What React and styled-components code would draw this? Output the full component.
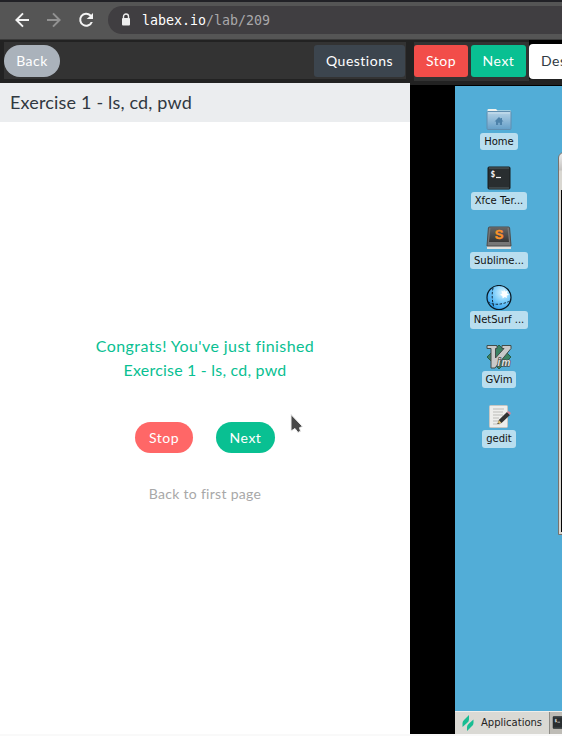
import React from "react";
import styled, { createGlobalStyle } from "styled-components";

const GlobalStyle = createGlobalStyle`
  * { box-sizing: border-box; }
  body { margin: 0; overflow: hidden; background: #f9f9f9; font-family: Lato, sans-serif; }
  svg { display: block; flex: none; }
  button { font-family: inherit; border: 0; padding: 0; margin: 0; }
`;

const Page = styled.div`
  width: 562px;
  height: 736px;
  display: flex;
  flex-direction: column;
  overflow: hidden;
`;

const BrowserBar = styled.header`
  height: 40px;
  flex: none;
  display: flex;
  align-items: center;
  background: #555555;
  border-top: 2px solid #212126;
  border-bottom: 1px solid #3a3a3a;
  padding-left: 10px;
`;

const NavIcons = styled.div`
  display: flex;
  gap: 8px;
  width: 98px;
  margin-top: -1px;
`;

const AddressBar = styled.div`
  flex: 1;
  height: 28px;
  margin-bottom: 1px;
  padding-left: 12px;
  display: flex;
  align-items: center;
  gap: 10px;
  border-radius: 14px 0 0 14px;
  background: #403e41;
  color: #ffffff;
  font: 13.3px/20px "DejaVu Sans Mono", monospace;
`;

const Url = styled.span`
  padding-top: 2px;
`;

const UrlPath = styled.span`
  color: #a9a8aa;
`;

const Workspace = styled.main`
  flex: 1;
  min-height: 0;
  display: flex;
`;

const LessonPane = styled.section`
  width: 410px;
  flex: none;
  height: 694px;
  display: flex;
  flex-direction: column;
  background: #ffffff;
`;

const MachinePane = styled.section`
  flex: 1;
  min-width: 0;
  height: 694px;
  display: flex;
  flex-direction: column;
  background: #000000;
`;

const Toolbar = styled.div`
  height: ${(p) => p.$height}px;
  flex: none;
  padding: 2px 4px 4px;
  background: #222222;
`;

const LessonTools = styled.div`
  height: 37px;
  display: flex;
  align-items: flex-start;
  justify-content: space-between;
  padding: 3px 1px 0 0;
  background: #333333;
`;

const MachineToolbar = styled.div`
  height: 45px;
  flex: none;
  display: flex;
  padding-left: 4px;
  background: #222222;
`;

const MachineTools = styled.div`
  width: 115px;
  flex: none;
  height: 39px;
  margin-top: 2px;
  padding-top: 3px;
  display: flex;
  gap: 3px;
  background: #333333;
`;

const TabHolder = styled.div`
  flex: 1;
  height: 39px;
  padding-top: 4px;
  background: #000000;
`;

const DesktopTab = styled.button`
  display: block;
  width: 80px;
  height: 35px;
  padding: 0 0 2px 12px;
  text-align: left;
  border-radius: 4px 0 0 4px;
  background: #ffffff;
  color: #303a43;
  font-size: 14px;
  letter-spacing: 0.5px;
`;

const Button = styled.button`
  width: ${(p) => p.$width}px;
  height: ${(p) => p.$height || 32}px;
  flex: none;
  border-radius: ${(p) => (p.$pill ? 16 : 3)}px;
  background: ${(p) => p.$color};
  color: #ffffff;
  font-size: 14px;
  line-height: 20px;
  letter-spacing: 0.5px;
  white-space: nowrap;
`;

const LessonTitle = styled.h1`
  height: 39px;
  flex: none;
  margin: 0;
  padding-left: 10px;
  background: #ebedef;
  color: #303841;
  font-size: 18px;
  font-weight: 400;
  line-height: 39px;
  letter-spacing: 0.17px;
`;

const Completion = styled.div`
  flex: 1;
  display: flex;
  flex-direction: column;
  align-items: center;
  padding-top: 212px;
`;

const Message = styled.p`
  margin: 0;
  color: #09c092;
  font-size: 16px;
  line-height: 24px;
  letter-spacing: ${(p) => p.$tracking}px;
  text-align: center;
`;

const Choices = styled.div`
  position: relative;
  display: flex;
  gap: 23px;
  margin-top: 40px;
`;

const Pointer = styled.svg`
  position: absolute;
  left: 153px;
  top: -10px;
`;

const FirstPage = styled.span`
  margin-top: 32px;
  color: #a8a8a8;
  font-size: 14px;
  line-height: 18px;
  letter-spacing: 0.3px;
`;

const Desktop = styled.div`
  position: relative;
  flex: 1;
  margin: 1px 0 0 45px;
  display: flex;
  flex-direction: column;
  background: #52add7;
  overflow: hidden;
`;

const Shortcuts = styled.div`
  flex: 1;
  width: 88px;
  padding-top: 20px;
`;

const Shortcut = styled.div`
  height: 59.6px;
  display: flex;
  flex-direction: column;
  align-items: center;
`;

const ShortcutLabel = styled.span`
  height: 17.5px;
  padding: 0 4px;
  border-radius: 3px;
  background: #b9deef;
  color: #111111;
  font: 10px/17px "DejaVu Sans", sans-serif;
  white-space: nowrap;
`;

const Window = styled.div`
  position: absolute;
  left: 103px;
  top: 66px;
  width: 60px;
  height: 383px;
  padding: 37px 2px 2px;
  border: 1px solid #77736e;
  border-radius: 6px 0 0 0;
  background: linear-gradient(#eeeeee 0, #c5c3c0 17px, #d9d7d1 18px);
`;

const WindowBody = styled.div`
  height: 100%;
  background: #050505;
`;

const Taskbar = styled.footer`
  height: 23px;
  flex: none;
  display: flex;
  align-items: center;
  border-top: 1px solid #eeeeeb;
  background: #dad9d4;
  color: #222222;
  font: 10px/20px "DejaVu Sans", sans-serif;
`;

const AppMenu = styled.div`
  width: 94px;
  flex: none;
  padding-left: 7px;
  display: flex;
  align-items: center;
  gap: 7px;
`;

const Task = styled.div`
  width: 60px;
  flex: none;
  height: 22px;
  padding: 4px 0 0 2px;
  border-left: 1px solid #8e8c87;
  background: #bebcb6;
`;

const NavArrow = ({ forward }) => (
  <svg width="24" height="24" viewBox="0 0 24 24" fill={forward ? "#929292" : "#f4f4f4"}>
    <path
      transform={forward ? "rotate(180 12 12)" : undefined}
      d="M19 11H8.8l4.9-4.9L12.3 4.7 5 12l7.3 7.3 1.4-1.4L8.8 13H19z"
    />
  </svg>
);

const Reload = () => (
  <svg width="24" height="24" viewBox="0 0 24 24" fill="#f4f4f4">
    <path d="M17.2 6.8A7 7 0 1 0 18.8 14h-2.1a5 5 0 1 1-.9-5.7L12.6 11H19V5z" />
  </svg>
);

const Lock = () => (
  <svg width="12" height="14" viewBox="0 0 12 14">
    <path d="M3.5 6V3.5a2.5 2.5 0 0 1 5 0V6" fill="none" stroke="#eeeeee" strokeWidth="1.4" />
    <rect x="2" y="5" width="8" height="7.5" rx="1" fill="#eeeeee" />
  </svg>
);

const Folder = () => (
  <svg width="26" height="27" viewBox="0 0 26 27">
    <defs>
      <linearGradient id="folder" x2="0" y2="1">
        <stop stopColor="#b5d2e6" />
        <stop offset="1" stopColor="#659fc8" />
      </linearGradient>
    </defs>
    <path d="M1.5 7V4q0-1 1-1H10l1.5 1.5H24q1 0 1 1V7z" fill="#f0f2ed" />
    <rect x="1" y="5.5" width="24" height="18" rx="1" fill="url(#folder)" stroke="#608eb0" />
    <path d="M2 7h22" stroke="#c9dfed" />
    <path d="m13 11-4.5 4.5H10V19h2.2v-2.3h1.6V19H16v-3.5h1.5L16 14v-2h-1.3v.8z" fill="#4d82aa" />
  </svg>
);

const Terminal = ({ size = 26 }) => (
  <svg width={size} height={size} viewBox="0 0 26 26">
    <rect x="2" y="1" width="22" height="22" rx="1" fill="#292e30" stroke="#171a1b" />
    <path d="M3 2h20M3 22h20" stroke="#556064" />
    <text x="4.5" y="11" fontFamily="DejaVu Sans Mono, monospace" fontSize="8" fontWeight="700" fill="#f4f4f4">$</text>
    <path d="M10 11.5h5" stroke="#eeeeee" strokeWidth="1.2" />
  </svg>
);

const Sublime = () => (
  <svg width="26" height="26" viewBox="0 0 26 26">
    <defs>
      <linearGradient id="keycap" x2="0" y2="1">
        <stop stopColor="#666" />
        <stop offset="1" stopColor="#363636" />
      </linearGradient>
    </defs>
    <path d="M2 18h22l1 2.5V24H1v-3.5z" fill="#e2e0dc" />
    <path d="M3.5 2h19q1 0 1.1 1L25 21H1L2.4 3Q2.5 2 3.5 2z" fill="#777" stroke="#4b4b4b" />
    <path d="M4.5 2.5h17L23 17H3z" fill="url(#keycap)" />
    <text x="13" y="14" textAnchor="middle" fontFamily="Liberation Sans, sans-serif" fontSize="13" fontWeight="700" fill="#fb922a" stroke="#fb922a" strokeWidth=".4">S</text>
  </svg>
);

const Globe = () => (
  <svg width="26" height="27" viewBox="0 0 26 27">
    <defs>
      <radialGradient id="globe" cx=".65" cy=".3" r=".75">
        <stop stopColor="#d8f3ff" />
        <stop offset=".5" stopColor="#7bcdfb" />
        <stop offset="1" stopColor="#2c9eed" />
      </radialGradient>
    </defs>
    <circle cx="13" cy="12.5" r="12" fill="url(#globe)" stroke="#091a26" strokeWidth="1.2" />
    <path d="M7 3Q5 12 8 23M2 17q9 5 22-1" fill="none" stroke="#102739" strokeDasharray="2.5 1.5" />
    <path d="m18 4 1 2.4 2.8-.7-1 2.6 2.2 1.3-2.4 1.2.4 2.3-2.3-1-2 1.4-.4-2.6-2.3-1.2 2.2-1.3-.8-2.7 2.2.7z" fill="#fff" />
  </svg>
);

const Vim = () => (
  <svg width="26" height="27" viewBox="0 0 26 27">
    <path d="m13 1 12 12-12 12L1 13z" fill="#3a8263" stroke="#285d48" />
    <path d="M1 1.5h10v3H9.5V14L18 4.5h-2v-3h9v3L9 24H5V4.5H1z" fill="#c9c9c9" stroke="#424d49" />
    <text x="11.5" y="22" fontFamily="Liberation Sans, sans-serif" fontSize="10" fontWeight="700" fontStyle="italic" fill="#e1e1e1" stroke="#46504c" strokeWidth="1.5" paintOrder="stroke" textLength="13">im</text>
  </svg>
);

const Editor = () => (
  <svg width="26" height="27" viewBox="0 0 26 27">
    <rect x="3.5" y="1.5" width="18" height="22" rx="1" fill="#eeeeec" stroke="#c7c7c3" />
    <path d="M7 5h11M7 8h10M7 11h10M7 14h6M7 17h5M7 20h7" stroke="#bcbcb9" />
    <path d="m21 8 3 3-8.5 8-4 1 1.3-4z" fill="#333" />
    <path d="m21 8 1.5-1 2.5 2-1 2z" fill="#d78398" />
    <path d="m12.8 16-1.3 4 4-1z" fill="#e5c678" />
    <path d="m12 18.5-.5 1.5 1.5-.4z" fill="#222" />
  </svg>
);

const AppsLogo = () => (
  <svg width="12" height="18" viewBox="0 0 12 18" fill="#18bd92">
    <path d="M7 1v4.5q0 2-2 3.5l-4.5 4V9q0-2 2-3.5zM11.5 5.5V9q0 2-2 3.5L5 17v-4q0-2 2-3.5z" />
  </svg>
);

const shortcuts = [
  ["Home", Folder],
  ["Xfce Ter...", Terminal],
  ["Sublime...", Sublime],
  ["NetSurf ...", Globe],
  ["GVim", Vim],
  ["gedit", Editor],
];

const IconSlot = styled.div`
  height: 26.5px;
  flex: none;
`;

export default function App() {
  return (
    <>
      <GlobalStyle />
      <Page>
        <BrowserBar>
          <NavIcons>
            <NavArrow />
            <NavArrow forward />
            <Reload />
          </NavIcons>
          <AddressBar>
            <Lock />
            <Url>labex.io<UrlPath>/lab/209</UrlPath></Url>
          </AddressBar>
        </BrowserBar>
        <Workspace>
          <LessonPane>
            <Toolbar $height={43}>
              <LessonTools>
                <Button $width={56} $pill $color="#aab2bb">Back</Button>
                <Button $width={91} $color="#3c454e">Questions</Button>
              </LessonTools>
            </Toolbar>
            <LessonTitle>Exercise 1 - ls, cd, pwd</LessonTitle>
            <Completion>
              <Message $tracking={0.42}>Congrats! You've just finished</Message>
              <Message $tracking={0.2}>Exercise 1 - ls, cd, pwd</Message>
              <Choices>
                <Button $width={58} $height={31} $pill $color="#ff6767">Stop</Button>
                <Button $width={59} $height={31} $pill $color="#09c092">Next</Button>
                <Pointer width="18" height="25" viewBox="0 0 18 25">
                  <path d="M3 2.5v16.5l4-2.5 3 4 2.5-1.3-1-3.5 3-1.2z" fill="#484848" stroke="#eeeeee" strokeWidth="1" />
                </Pointer>
              </Choices>
              <FirstPage>Back to first page</FirstPage>
            </Completion>
          </LessonPane>
          <MachinePane>
            <MachineToolbar>
              <MachineTools>
                <Button $width={54} $color="#f24d49">Stop</Button>
                <Button $width={55} $color="#09c092">Next</Button>
              </MachineTools>
              <TabHolder><DesktopTab>Desktop</DesktopTab></TabHolder>
            </MachineToolbar>
            <Desktop>
              <Shortcuts>
                {shortcuts.map(([name, Icon]) => (
                  <Shortcut key={name}>
                    <IconSlot><Icon /></IconSlot>
                    <ShortcutLabel>{name}</ShortcutLabel>
                  </Shortcut>
                ))}
              </Shortcuts>
              <Window><WindowBody /></Window>
              <Taskbar>
                <AppMenu><AppsLogo />Applications</AppMenu>
                <Task><Terminal size={14} /></Task>
              </Taskbar>
            </Desktop>
          </MachinePane>
        </Workspace>
      </Page>
    </>
  );
}
